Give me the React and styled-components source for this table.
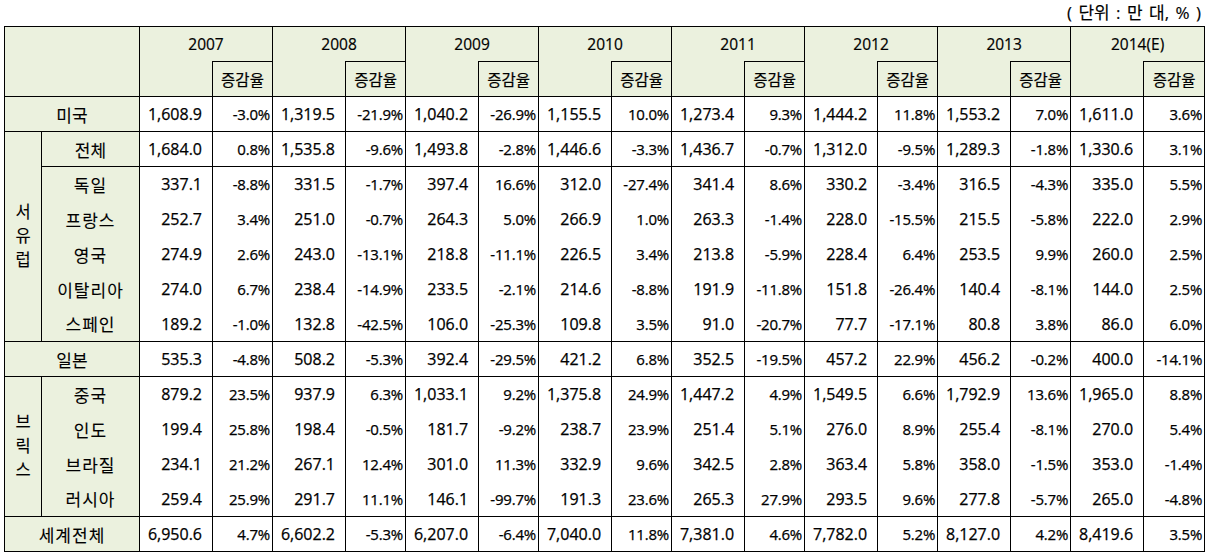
import React from "react";
import styled, { createGlobalStyle } from "styled-components";

const Global = createGlobalStyle`
  html, body { margin: 0; padding: 0; background: #fff; }
  body {
    font-family: "Open Sans", "Noto Sans CJK KR", sans-serif;
    color: #000;
  }
`;

const Page = styled.div`
  width: 1201px;
  margin-left: 4px;
  display: flex;
  flex-direction: column;
`;

const Unit = styled.div`
  height: 26px;
  display: flex;
  align-items: center;
  justify-content: flex-end;
  padding-right: 4px;
  font-size: 17px;
  word-spacing: 2px;
  line-height: 1;
  padding-bottom: 2px;
  box-sizing: border-box;
  white-space: pre;
  -webkit-text-stroke: 0.15px #000;
`;

const Table = styled.table`
  border-collapse: collapse;
  table-layout: fixed;
  width: 1201px;
  border: 1px solid #000;
`;

const Row = styled.tr`
  height: 35px;
`;

const HeadCell = styled.th`
  background: #ebf1de;
  font-weight: normal;
  font-size: 15.5px;
  text-align: center;
  vertical-align: middle;
  padding: 0;
  -webkit-text-stroke: 0.2px #000;
  border-left: 1px solid #000;
  border-right: 1px solid #000;
  border-top: ${(p) => (p.$noTop ? "none" : "1px solid #000")};
  border-bottom: ${(p) => (p.$noBottom ? "none" : "1px solid #000")};
`;

const Label = styled.td`
  background: #ebf1de;
  font-size: 17px;
  text-align: center;
  vertical-align: middle;
  padding: 0;
  -webkit-text-stroke: 0.1px #000;
  border: 1px solid #000;
  border-top: ${(p) => (p.$top ? "1px solid #000" : "none")};
  border-bottom: ${(p) => (p.$bottom ? "1px solid #000" : "none")};
  letter-spacing: ${(p) => (p.$spread ? "1px" : "0")};
`;

const GroupLabel = styled.td`
  background: #ebf1de;
  font-size: 16.5px;
  line-height: 24px;
  text-align: center;
  vertical-align: middle;
  padding: 0 0 2px 0;
  -webkit-text-stroke: 0.1px #000;
  border: 1px solid #000;
`;

const Value = styled.td`
  background: #fff;
  text-align: right;
  vertical-align: middle;
  padding: 0 ${(p) => (p.$pct ? "2px" : "10px")} 0 0;
  font-size: ${(p) => (p.$pct ? "15px" : "16px")};
  letter-spacing: ${(p) => (p.$pct ? "-0.2px" : "0")};
  -webkit-text-stroke: 0.25px #000;
  border-left: 1px solid #000;
  border-right: 1px solid #000;
  border-top: ${(p) => (p.$top ? "1px solid #000" : "none")};
  border-bottom: ${(p) => (p.$bottom ? "1px solid #000" : "none")};
  white-space: nowrap;
`;

const years = ["2007", "2008", "2009", "2010", "2011", "2012", "2013", "2014(E)"];

const d = (s) => {
  const parts = s.trim().split(/\s+/);
  const out = [];
  for (let i = 0; i < parts.length; i += 2) out.push([parts[i], parts[i + 1]]);
  return out;
};

const data = {
  미국: d("1,608.9 -3.0% 1,319.5 -21.9% 1,040.2 -26.9% 1,155.5 10.0% 1,273.4 9.3% 1,444.2 11.8% 1,553.2 7.0% 1,611.0 3.6%"),
  전체: d("1,684.0 0.8% 1,535.8 -9.6% 1,493.8 -2.8% 1,446.6 -3.3% 1,436.7 -0.7% 1,312.0 -9.5% 1,289.3 -1.8% 1,330.6 3.1%"),
  독일: d("337.1 -8.8% 331.5 -1.7% 397.4 16.6% 312.0 -27.4% 341.4 8.6% 330.2 -3.4% 316.5 -4.3% 335.0 5.5%"),
  프랑스: d("252.7 3.4% 251.0 -0.7% 264.3 5.0% 266.9 1.0% 263.3 -1.4% 228.0 -15.5% 215.5 -5.8% 222.0 2.9%"),
  영국: d("274.9 2.6% 243.0 -13.1% 218.8 -11.1% 226.5 3.4% 213.8 -5.9% 228.4 6.4% 253.5 9.9% 260.0 2.5%"),
  이탈리아: d("274.0 6.7% 238.4 -14.9% 233.5 -2.1% 214.6 -8.8% 191.9 -11.8% 151.8 -26.4% 140.4 -8.1% 144.0 2.5%"),
  스페인: d("189.2 -1.0% 132.8 -42.5% 106.0 -25.3% 109.8 3.5% 91.0 -20.7% 77.7 -17.1% 80.8 3.8% 86.0 6.0%"),
  일본: d("535.3 -4.8% 508.2 -5.3% 392.4 -29.5% 421.2 6.8% 352.5 -19.5% 457.2 22.9% 456.2 -0.2% 400.0 -14.1%"),
  중국: d("879.2 23.5% 937.9 6.3% 1,033.1 9.2% 1,375.8 24.9% 1,447.2 4.9% 1,549.5 6.6% 1,792.9 13.6% 1,965.0 8.8%"),
  인도: d("199.4 25.8% 198.4 -0.5% 181.7 -9.2% 238.7 23.9% 251.4 5.1% 276.0 8.9% 255.4 -8.1% 270.0 5.4%"),
  브라질: d("234.1 21.2% 267.1 12.4% 301.0 11.3% 332.9 9.6% 342.5 2.8% 363.4 5.8% 358.0 -1.5% 353.0 -1.4%"),
  러시아: d("259.4 25.9% 291.7 11.1% 146.1 -99.7% 191.3 23.6% 265.3 27.9% 293.5 9.6% 277.8 -5.7% 265.0 -4.8%"),
  세계전체: d("6,950.6 4.7% 6,602.2 -5.3% 6,207.0 -6.4% 7,040.0 11.8% 7,381.0 4.6% 7,782.0 5.2% 8,127.0 4.2% 8,419.6 3.5%"),
};

const Cells = ({ name, top, bottom }) =>
  data[name].map(([v, p], i) => (
    <React.Fragment key={i}>
      <Value $top={top} $bottom={bottom}>{v}</Value>
      <Value $pct $top={top} $bottom={bottom}>{p}</Value>
    </React.Fragment>
  ));

const colWidths = [37, 98];
years.forEach((_, i) => {
  colWidths.push(73);
  colWidths.push(i === years.length - 1 ? 61 : 60);
});

const Col = styled.col``;

const westEurope = ["독일", "프랑스", "영국", "이탈리아", "스페인"];
const brics = ["중국", "인도", "브라질", "러시아"];

export default function App() {
  return (
    <Page>
      <Global />
      <Unit>{"( 단위 : 만 대, % )"}</Unit>
      <Table>
        <colgroup>
          {colWidths.map((w, i) => (
            <Col key={i} width={w} />
          ))}
        </colgroup>
        <thead>
          <Row>
            <HeadCell colSpan={2} rowSpan={2} />
            {years.map((y) => (
              <HeadCell key={y} colSpan={2} $noBottom>
                {y}
              </HeadCell>
            ))}
          </Row>
          <Row>
            {years.map((y) => (
              <React.Fragment key={y}>
                <HeadCell $noTop />
                <HeadCell>증감율</HeadCell>
              </React.Fragment>
            ))}
          </Row>
        </thead>
        <tbody>
          <Row>
            <Label colSpan={2} $top $bottom>미국</Label>
            <Cells name="미국" top bottom />
          </Row>
          <Row>
            <GroupLabel rowSpan={6}>
              서<br />유<br />럽
            </GroupLabel>
            <Label $top $bottom>전체</Label>
            <Cells name="전체" top bottom />
          </Row>
          {westEurope.map((n, i) => (
            <Row key={n}>
              <Label $top={i === 0} $bottom={i === westEurope.length - 1} $spread>
                {n}
              </Label>
              <Cells name={n} top={i === 0} bottom={i === westEurope.length - 1} />
            </Row>
          ))}
          <Row>
            <Label colSpan={2} $top $bottom>일본</Label>
            <Cells name="일본" top bottom />
          </Row>
          {brics.map((n, i) => (
            <Row key={n}>
              {i === 0 && (
                <GroupLabel rowSpan={4}>
                  브<br />릭<br />스
                </GroupLabel>
              )}
              <Label $top={i === 0} $bottom={i === brics.length - 1} $spread>
                {n}
              </Label>
              <Cells name={n} top={i === 0} bottom={i === brics.length - 1} />
            </Row>
          ))}
          <Row>
            <Label colSpan={2} $top $bottom $spread>세계전체</Label>
            <Cells name="세계전체" top bottom />
          </Row>
        </tbody>
      </Table>
    </Page>
  );
}
